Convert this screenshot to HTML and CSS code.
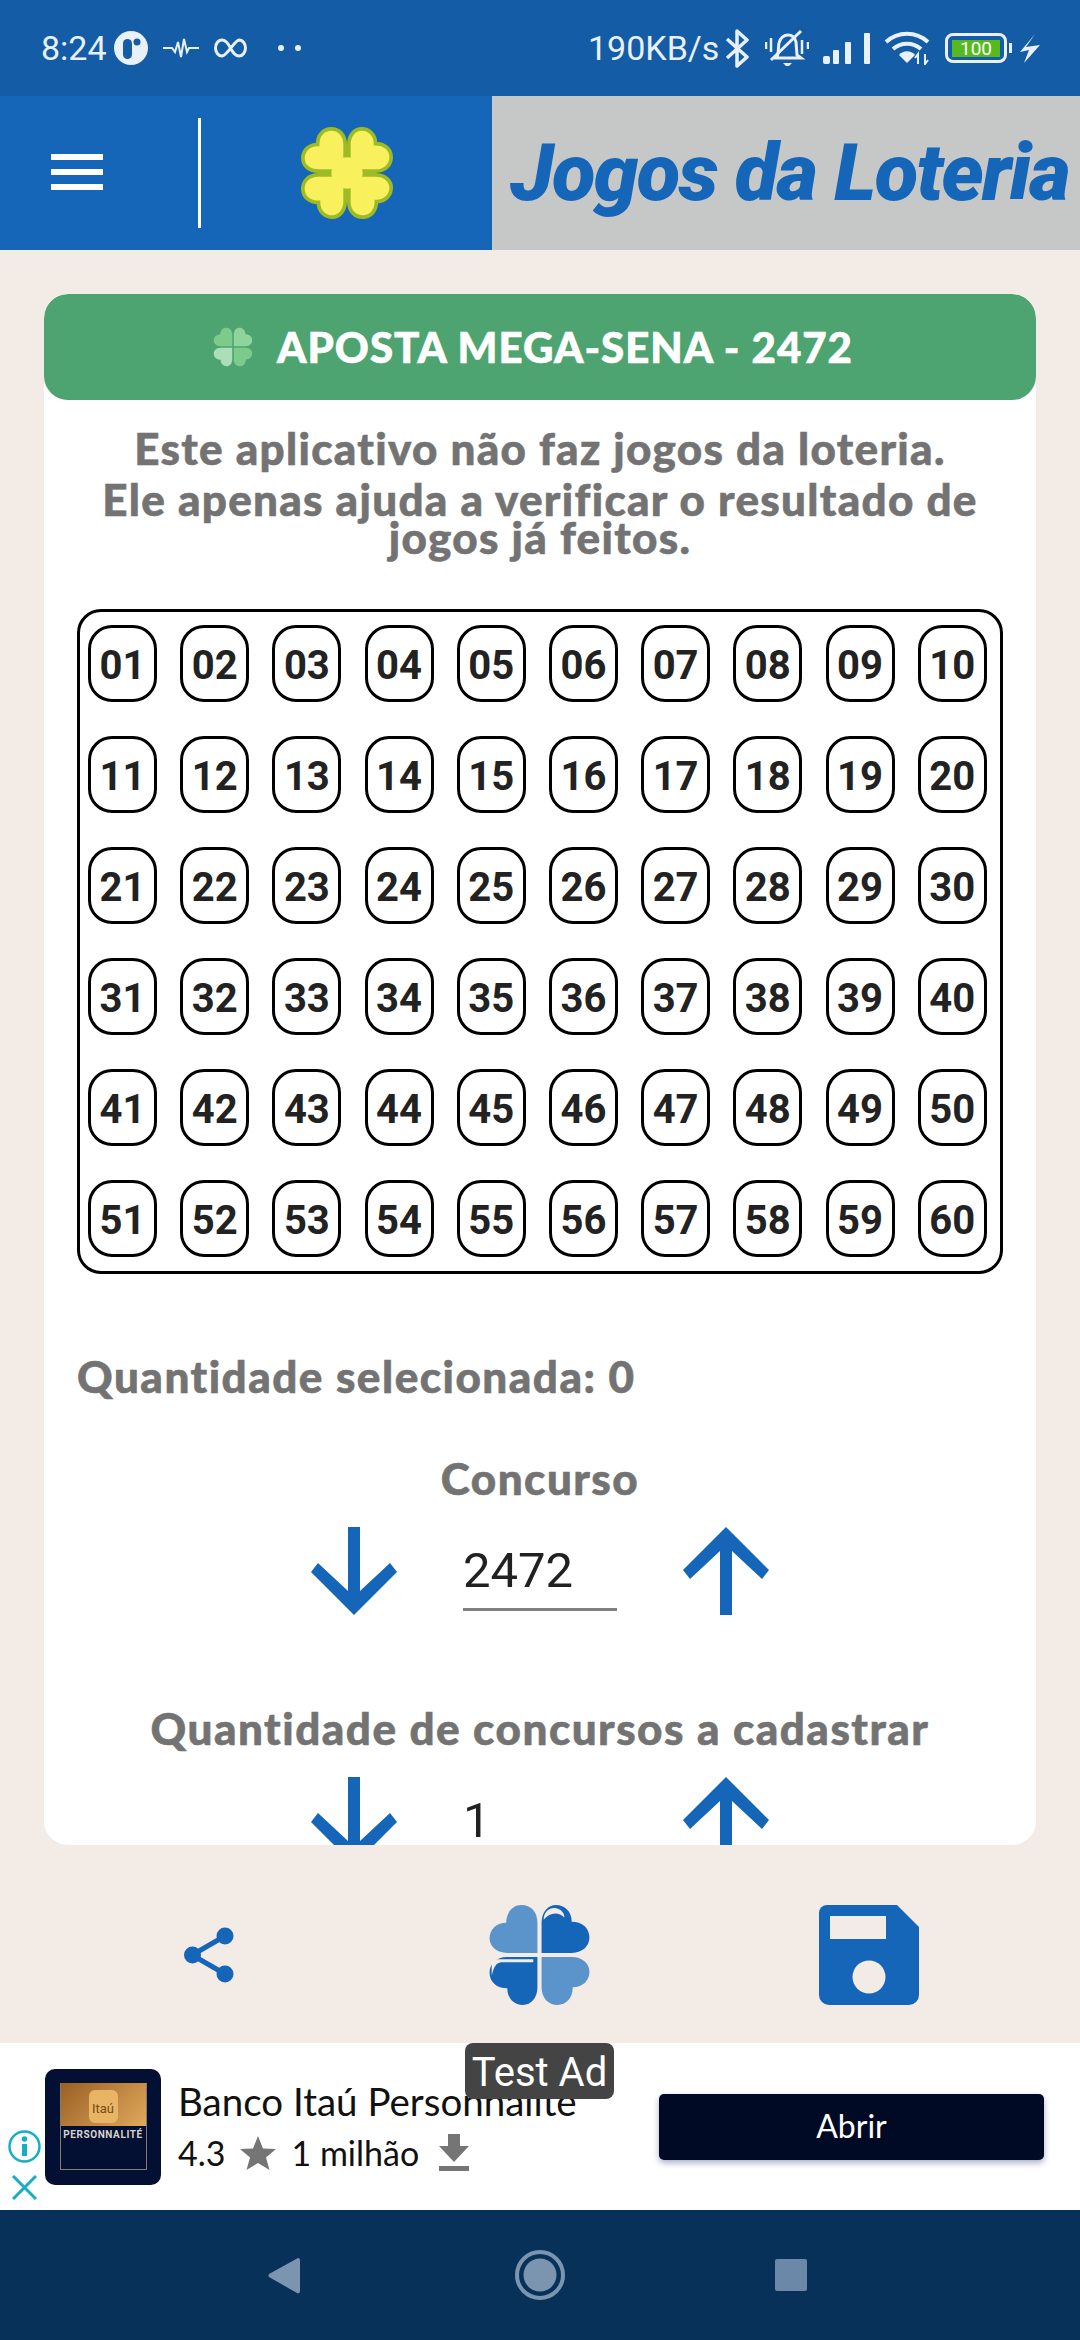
FILE: index.html
```html
<!DOCTYPE html>
<html lang="pt-BR">
<head>
  <meta charset="UTF-8">
  <meta name="viewport" content="width=device-width, initial-scale=1.0">
  <title>Jogos da Loteria</title>
  <link rel="stylesheet" href="styles.css">
</head>
<body>
  <svg class="defs" width="0" height="0">
    <defs>
      <path id="leaf" d="M48 48 L48 19 C48 8 41 2 33 2 C24 2 18 9 18 19 C8 19 2 26 2 34 C2 42 9 48 19 48 Z"/>
      <path id="arrow" d="M37 0 H49 V64 L79 36 L86 45 L43 88 L0 45 L7 36 L37 64 Z"/>
    </defs>
  </svg>

  <div class="app">
    <div class="status-bar">
      <div class="status-left">
        <span class="clock">8:24</span>
        <svg class="st-circle" width="34" height="34" viewBox="0 0 34 34"><circle cx="17" cy="17" r="17" fill="#e8f0fa"/><rect x="9" y="8" width="9" height="20" rx="4.5" fill="#155ca6"/><circle cx="23" cy="11" r="3.5" fill="#155ca6"/></svg>
        <svg class="st-pulse" width="36" height="24" viewBox="0 0 36 24"><path d="M0 12 H9 L12 16 L15 6 L18 21 L21 3 L24 16 L26 12 H36" fill="none" stroke="#e8f0fa" stroke-width="2"/></svg>
        <svg class="st-inf" width="33" height="20" viewBox="0 0 33 20"><path d="M16.5 10 C13 3 10 2 8 2 C4 2 1.5 6 1.5 10 C1.5 14 4 18 8 18 C13 18 20 3 25 2 C29 2 31.5 6 31.5 10 C31.5 14 29 18 25 18 C22 18 19 15 16.5 10" fill="none" stroke="#e8f0fa" stroke-width="3"/></svg>
        <span class="st-dot first"></span>
        <span class="st-dot"></span>
      </div>
      <div class="status-right">
        <span class="speed">190KB/s</span>
        <svg class="st-bt" width="25" height="39" viewBox="0 0 25 39"><path d="M2 10 L22 28 L12 37 V2 L22 11 L2 29" fill="none" stroke="#e8f0fa" stroke-width="3.5" stroke-linejoin="round"/></svg>
        <svg class="st-bell" width="44" height="38" viewBox="0 0 44 38"><path d="M12 28 C14 24 13 18 14 14 C15 9 19 6 23 6 C27 6 30 9 31 13 L32 26 L36 29 H9" fill="none" stroke="#e8f0fa" stroke-width="3"/><path d="M6 31 L36 2" stroke="#e8f0fa" stroke-width="3"/><path d="M18 34 H27 L24 37 H21 Z" fill="#e8f0fa"/><path d="M1 13 V20 M6 9 V23 M37 11 V25 M43 13 V20" stroke="#e8f0fa" stroke-width="2.5"/></svg>
        <svg class="st-signal" width="48" height="31" viewBox="0 0 48 31"><rect x="0" y="23" width="7" height="8" rx="2" fill="#e8f0fa"/><rect x="10" y="17" width="6" height="14" rx="1" fill="#e8f0fa"/><rect x="22" y="9" width="6" height="22" rx="1" fill="#e8f0fa"/><rect x="41" y="0" width="6" height="31" rx="1" fill="#e8f0fa"/></svg>
        <svg class="st-wifi" width="46" height="34" viewBox="0 0 46 34"><path d="M2 11 C14 0 32 0 44 11 M9 18 C17 11 29 11 37 18" fill="none" stroke="#e8f0fa" stroke-width="4"/><path d="M15 24 C19 19 27 19 31 24 L23 32 Z" fill="#e8f0fa"/><path d="M34 33 V23 L31 27 M41 23 V33 L44 29" fill="none" stroke="#e8f0fa" stroke-width="2"/></svg>
        <div class="battery"><span class="battery-level">100</span></div>
        <span class="battery-tip"></span>
        <svg class="st-bolt" width="20" height="29" viewBox="0 0 20 29"><path d="M15 0 L6 13 L20 11 L4 29 L9 16 L0 18 Z" fill="#e8f0fa"/></svg>
      </div>
    </div>

    <div class="top-bar">
      <div class="top-left">
        <div class="menu-btn"><span></span><span></span><span></span></div>
        <div class="top-divider"></div>
        <svg class="logo-clover" width="92" height="92" viewBox="0 0 100 100">
          <g fill="#f8f05c" stroke="#9dbb25" stroke-width="4">
            <use href="#leaf"/>
            <use href="#leaf" transform="rotate(90 50 50)"/>
            <use href="#leaf" transform="rotate(180 50 50)"/>
            <use href="#leaf" transform="rotate(270 50 50)"/>
          </g>
          <circle cx="50" cy="50" r="17" fill="#f8f05c"/>
        </svg>
      </div>
      <div class="top-title"><span class="title-text">Jogos da Loteria</span></div>
    </div>

    <main class="content">
      <div class="card">
        <div class="bet-title">
          <svg width="40" height="40" viewBox="0 0 100 100">
            <use href="#leaf" fill="#7ccb8a"/>
            <use href="#leaf" fill="#8fd49c" transform="rotate(90 50 50)"/>
            <use href="#leaf" fill="#7ccb8a" transform="rotate(180 50 50)"/>
            <use href="#leaf" fill="#aadfb8" transform="rotate(270 50 50)"/>
          </svg>
          <span>APOSTA MEGA-SENA - 2472</span>
        </div>

        <p class="intro">Este aplicativo não faz jogos da loteria.</p>
        <p class="intro second">Ele apenas ajuda a verificar o resultado de jogos já feitos.</p>

        <div class="numbers">
          <div class="num">01</div><div class="num">02</div><div class="num">03</div><div class="num">04</div><div class="num">05</div><div class="num">06</div><div class="num">07</div><div class="num">08</div><div class="num">09</div><div class="num">10</div>
          <div class="num">11</div><div class="num">12</div><div class="num">13</div><div class="num">14</div><div class="num">15</div><div class="num">16</div><div class="num">17</div><div class="num">18</div><div class="num">19</div><div class="num">20</div>
          <div class="num">21</div><div class="num">22</div><div class="num">23</div><div class="num">24</div><div class="num">25</div><div class="num">26</div><div class="num">27</div><div class="num">28</div><div class="num">29</div><div class="num">30</div>
          <div class="num">31</div><div class="num">32</div><div class="num">33</div><div class="num">34</div><div class="num">35</div><div class="num">36</div><div class="num">37</div><div class="num">38</div><div class="num">39</div><div class="num">40</div>
          <div class="num">41</div><div class="num">42</div><div class="num">43</div><div class="num">44</div><div class="num">45</div><div class="num">46</div><div class="num">47</div><div class="num">48</div><div class="num">49</div><div class="num">50</div>
          <div class="num">51</div><div class="num">52</div><div class="num">53</div><div class="num">54</div><div class="num">55</div><div class="num">56</div><div class="num">57</div><div class="num">58</div><div class="num">59</div><div class="num">60</div>
        </div>

        <div class="label selected">Quantidade selecionada: 0</div>

        <div class="label contest">Concurso</div>
        <div class="stepper">
          <svg class="arrow" width="86" height="88" viewBox="0 0 86 88"><use href="#arrow"/></svg>
          <div class="field">2472</div>
          <svg class="arrow" width="86" height="88" viewBox="0 0 86 88"><use href="#arrow" transform="rotate(180 43 44)"/></svg>
        </div>

        <div class="label amount">Quantidade de concursos a cadastrar</div>
        <div class="stepper">
          <svg class="arrow" width="86" height="88" viewBox="0 0 86 88"><use href="#arrow"/></svg>
          <div class="field">1</div>
          <svg class="arrow" width="86" height="88" viewBox="0 0 86 88"><use href="#arrow" transform="rotate(180 43 44)"/></svg>
        </div>
      </div>
    </main>

    <div class="toolbar">
      <svg width="50" height="56" viewBox="0 0 50 56">
        <path d="M41 9 L8 28 L41 47" fill="none" stroke="#1565b8" stroke-width="5"/>
        <circle cx="41" cy="9" r="8.5" fill="#1565b8"/>
        <circle cx="8.5" cy="28" r="8.5" fill="#1565b8"/>
        <circle cx="41" cy="47" r="8.5" fill="#1565b8"/>
      </svg>
      <svg width="105" height="104" viewBox="0 0 100 100">
        <use href="#leaf" fill="#5b93cb"/>
        <use href="#leaf" fill="#1565b8" transform="rotate(90 50 50)"/>
        <use href="#leaf" fill="#5b93cb" transform="rotate(180 50 50)"/>
        <use href="#leaf" fill="#1565b8" transform="rotate(270 50 50)"/>
        <path d="M54 16 C54 8 60 4 66 5 C71 6 74 10 74 14 C68 8 60 9 54 16" fill="#f3ebe5"/>
        <path d="M4 58 C4 55 7 54 10 54 H44 V57 H14 C8 57 6 62 4 70 Z" fill="#f3ebe5"/>
      </svg>
      <svg width="100" height="100" viewBox="0 0 100 100">
        <path d="M8 0 H78 L100 22 V90 A10 10 0 0 1 90 100 H10 A10 10 0 0 1 0 90 V8 A8 8 0 0 1 8 0 Z" fill="#1565b8"/>
        <rect x="11" y="11" width="56" height="23" fill="#f3ebe5"/>
        <circle cx="50" cy="72" r="16.5" fill="#f3ebe5"/>
      </svg>
    </div>

    <div class="ad">
      <div class="ad-logo">
        <div class="ad-logo-inner">
          <div class="ad-logo-gold"><span class="ad-logo-itau">Itaú</span></div>
          <div class="ad-logo-dark">PERSONNALITÉ</div>
        </div>
      </div>
      <div class="ad-info">
        <div class="ad-name">Banco Itaú Personnalité</div>
        <div class="ad-meta">
          <span>4.3</span>
          <svg class="ad-star" width="36" height="34" viewBox="0 0 36 34"><path d="M18 0 L23 12.5 L36 13 L26 21.5 L29.5 34 L18 27 L6.500 34 L10 21.5 L0 13 L13 12.500 Z" fill="#757575"/></svg>
          <span>1 milhão</span>
          <svg class="ad-down" width="30" height="37" viewBox="0 0 30 37"><path d="M9 0 H21 V12 H30 L15 28 L0 12 H9 Z M0 32 H30 V37 H0 Z" fill="#757575"/></svg>
        </div>
      </div>
      <div class="ad-open">Abrir</div>
      <div class="test-badge">Test Ad</div>
      <svg class="ad-i" width="33" height="33" viewBox="0 0 33 33"><circle cx="16.500" cy="16.500" r="15" fill="none" stroke="#14aec8" stroke-width="2.500"/><rect x="14" y="14" width="5" height="12" fill="#14aec8"/><circle cx="16.500" cy="9" r="2.800" fill="#14aec8"/></svg>
      <svg class="ad-x" width="25" height="25" viewBox="0 0 25 25"><path d="M1 1 L24 24 M24 1 L1 24" stroke="#14aec8" stroke-width="3"/></svg>
    </div>

    <div class="nav-bar">
      <svg width="32" height="37" viewBox="0 0 32 37"><path d="M30 1 Q32 1 32 3 V34 Q32 37 29 36 L1 20 Q0 18.500 1 17 Z" fill="#7b94b0"/></svg>
      <svg class="nav-home" width="50" height="50" viewBox="0 0 50 50"><circle cx="25" cy="25" r="23" fill="none" stroke="#7b94b0" stroke-width="4"/><circle cx="25" cy="25" r="16.500" fill="#7b94b0"/></svg>
      <span class="nav-square"></span>
    </div>
  </div>
</body>
</html>
```

FILE: styles.css
```css
* {
  box-sizing: border-box;
}

body {
  margin: 0;
  background-color: #f3ebe5;
  font-family: 'Roboto', sans-serif;
}

.defs {
  position: absolute;
}

.app {
  display: flex;
  flex-direction: column;
  width: 1080px;
  height: 2340px;
  overflow: hidden;
}

/* status bar */
.status-bar {
  display: flex;
  justify-content: space-between;
  align-items: center;
  height: 96px;
  padding: 0 40px 0 41px;
  background-color: #155ca6;
  color: #e8f0fa;
  font-size: 34px;
}

.status-left,
.status-right {
  display: flex;
  align-items: center;
}

.clock {
  width: 73px;
}

.st-pulse {
  margin-left: 15px;
}

.st-inf {
  margin-left: 15px;
}

.st-dot {
  width: 6px;
  height: 6px;
  margin-left: 11px;
  border-radius: 50%;
  background-color: #e8f0fa;
}

.st-dot.first {
  margin-left: 31px;
}

.speed {
  width: 137px;
}

.st-bell {
  margin-left: 15px;
}

.st-signal {
  margin-left: 14px;
}

.st-wifi {
  margin-left: 13px;
}

.battery {
  display: flex;
  align-items: center;
  justify-content: center;
  width: 62px;
  height: 30px;
  margin-left: 15px;
  border: 3px solid #e8f0fa;
  border-radius: 8px;
}

.battery-level {
  width: 48px;
  height: 17px;
  background-color: #58b81f;
  font-size: 19px;
  line-height: 17px;
  text-align: center;
  color: #fff;
}

.battery-tip {
  width: 3px;
  height: 10px;
  margin-left: 2px;
  background-color: #e8f0fa;
}

.st-bolt {
  margin-left: 8px;
}

/* header */
.top-bar {
  display: flex;
  height: 154px;
}

.top-left {
  display: flex;
  align-items: center;
  width: 492px;
  padding-left: 51px;
  background-color: #1565b8;
}

.menu-btn {
  display: flex;
  flex-direction: column;
  gap: 9px;
  width: 52px;
  margin-bottom: 3px;
}

.menu-btn span {
  height: 6px;
  background-color: #fff;
}

.top-divider {
  width: 3px;
  height: 110px;
  margin-left: 95px;
  background-color: #fff;
}

.logo-clover {
  margin-left: 100px;
}

.top-title {
  flex: 1;
  display: flex;
  align-items: center;
  padding-left: 18px;
  background-color: #c5c8c6;
  overflow: hidden;
}

.title-text {
  font-family: 'Roboto', sans-serif;
  font-size: 80px;
  font-weight: 900;
  font-style: italic;
  letter-spacing: -1.7px;
  white-space: nowrap;
  color: #1565b8;
}

/* card */
.content {
  flex: 1;
  min-height: 0;
  padding: 44px 44px 0;
}

.card {
  height: 100%;
  overflow: hidden;
  border-radius: 24px;
  background-color: #fff;
}

.bet-title {
  display: flex;
  align-items: center;
  justify-content: center;
  gap: 24px;
  height: 106px;
  padding-right: 14px;
  border-radius: 24px;
  background-color: #4ea471;
  font-family: 'Lato', sans-serif;
  font-size: 42px;
  font-weight: 900;
  letter-spacing: 1px;
  color: #fff;
  -webkit-text-stroke: 0.6px #fff;
}

.intro {
  margin: 29px 60px 0;
  font-family: 'Lato', sans-serif;
  font-size: 44px;
  font-weight: 900;
  letter-spacing: 1.3px;
  line-height: 38px;
  text-align: center;
  color: #737373;
  -webkit-text-stroke: 0.6px #737373;
}

.intro.second {
  margin: 13px 30px 0;
}

.numbers {
  display: grid;
  grid-template-columns: repeat(10, 69px);
  column-gap: 23.2px;
  row-gap: 34px;
  width: 926px;
  margin: 53px 0 0 33px;
  padding: 13px 8px 14px;
  border: 3px solid #000;
  border-radius: 24px;
}

.num {
  display: flex;
  align-items: center;
  justify-content: center;
  height: 77px;
  padding-top: 3px;
  border: 3px solid #000;
  border-radius: 24px;
  font-size: 40px;
  font-weight: 700;
  color: #222;
}

.label {
  font-family: 'Lato', sans-serif;
  font-size: 44px;
  font-weight: 900;
  letter-spacing: 1.5px;
  line-height: 48px;
  color: #737373;
  -webkit-text-stroke: 0.6px #737373;
}

.selected {
  margin: 78px 0 0 33px;
}

.contest {
  margin-top: 54px;
  text-align: center;
}

.amount {
  margin-top: 89px;
  text-align: center;
}

.stepper {
  display: flex;
  justify-content: center;
  gap: 66px;
  margin-top: 25px;
}

.arrow {
  flex: none;
  fill: #1565b8;
}

.field {
  width: 154px;
  height: 69px;
  margin-top: 15px;
  padding-top: 1px;
  padding-bottom: 10px;
  border-bottom: 3px solid #808080;
  font-size: 49px;
  line-height: 56px;
  color: #212121;
}

/* bottom actions */
.toolbar {
  display: grid;
  grid-template-columns: repeat(3, 1fr);
  justify-items: center;
  align-items: center;
  height: 198px;
  padding: 22px 46px 0 44px;
}

/* ad banner */
.ad {
  position: relative;
  display: flex;
  align-items: center;
  height: 167px;
  padding: 0 36px 0 45px;
  background-color: #fff;
}

.ad-logo {
  display: flex;
  justify-content: center;
  align-items: center;
  width: 116px;
  height: 116px;
  border-radius: 10px;
  background-color: #030f33;
}

.ad-logo-inner {
  width: 87px;
  height: 87px;
  border: 1px solid #8a7a6a;
  border-top: 0;
}

.ad-logo-gold {
  display: flex;
  align-items: flex-end;
  justify-content: center;
  height: 43px;
  background: linear-gradient(135deg, #9a5f24, #e0a95c);
}

.ad-logo-itau {
  width: 29px;
  height: 33px;
  margin-bottom: 3px;
  border-radius: 6px;
  background-color: #e8b566;
  font-size: 13px;
  line-height: 38px;
  text-align: center;
  color: #7a4a14;
}

.ad-logo-dark {
  padding-top: 3px;
  font-size: 10px;
  font-weight: 700;
  letter-spacing: 0.6px;
  text-align: center;
  white-space: nowrap;
  color: #d8d4cc;
}

.ad-info {
  margin-left: 17px;
  font-family: 'Lato', sans-serif;
  color: #111;
}

.ad-name {
  font-size: 38.5px;
  line-height: 52px;
  white-space: nowrap;
}

.ad-meta {
  display: flex;
  align-items: center;
  font-size: 34px;
  line-height: 52px;
}

.ad-star {
  margin: 0 15px;
}

.ad-down {
  margin-left: 20px;
}

.ad-open {
  width: 385px;
  height: 66px;
  margin-left: auto;
  border-radius: 5px;
  background-color: #010a24;
  box-shadow: 0 3px 6px rgba(40, 60, 110, 0.4);
  font-family: 'Lato', sans-serif;
  font-size: 32px;
  line-height: 64px;
  text-align: center;
  color: #fff;
}

.test-badge {
  position: absolute;
  top: 0;
  left: 465px;
  width: 149px;
  height: 56px;
  border-radius: 8px;
  background-color: #444;
  font-size: 40px;
  line-height: 60px;
  text-align: center;
  color: #fff;
}

.ad-i {
  position: absolute;
  left: 8px;
  top: 87px;
}

.ad-x {
  position: absolute;
  left: 12px;
  top: 132px;
}

/* navigation */
.nav-bar {
  display: flex;
  align-items: center;
  height: 130px;
  padding-left: 268px;
  background-color: #08315a;
}

.nav-home {
  margin: 0 210px 0 215px;
}

.nav-square {
  width: 32px;
  height: 32px;
  border-radius: 2px;
  background-color: #6b88a8;
}
```
